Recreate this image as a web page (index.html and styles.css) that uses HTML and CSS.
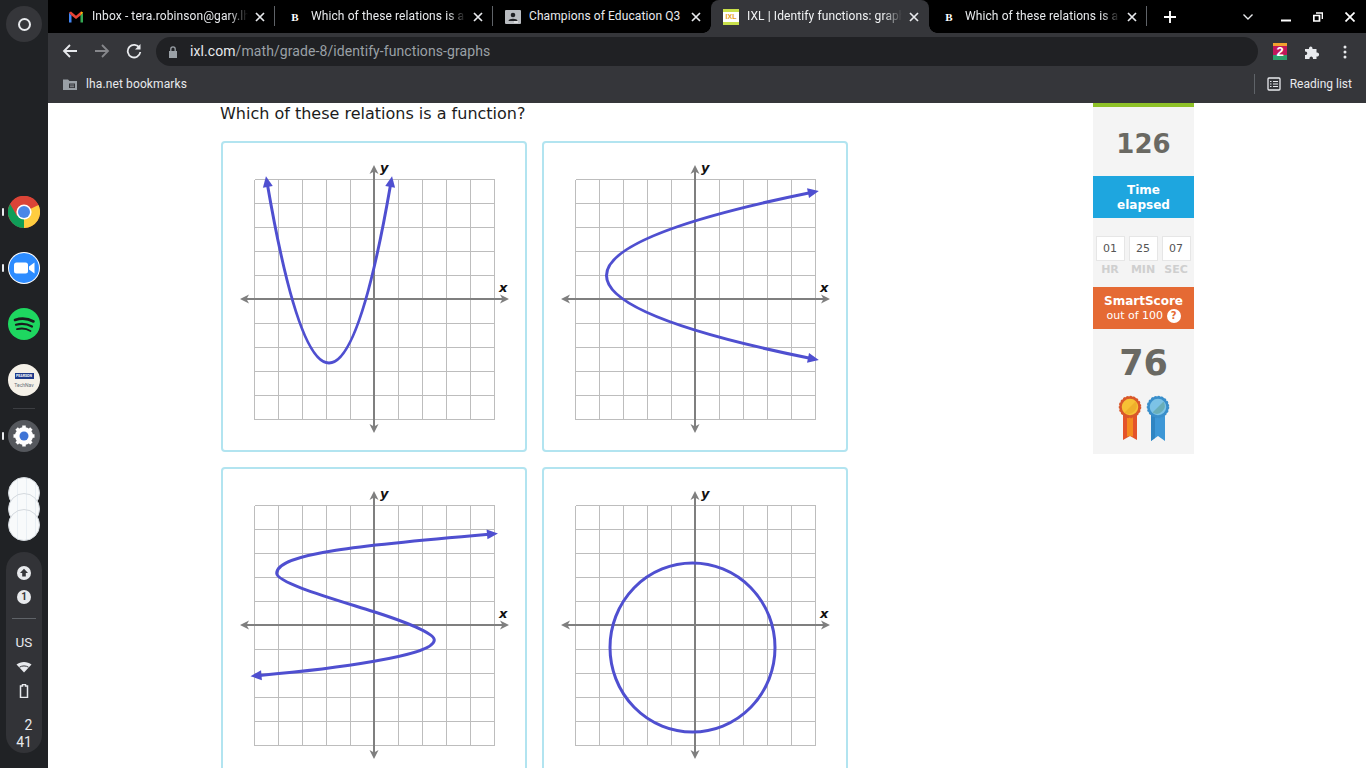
FILE: index.html
```html
<!DOCTYPE html>
<html lang="en">
<head>
<meta charset="utf-8">
<title>IXL | Identify functions: graphs</title>
<link rel="stylesheet" href="styles.css">
</head>
<body>
<svg class="defs" aria-hidden="true">
  <defs>
    <marker id="head" markerUnits="userSpaceOnUse" markerWidth="14" markerHeight="12" refX="2" refY="5" orient="auto-start-reverse" overflow="visible">
      <path d="M0 0L11 5L0 10Z" fill="#4f4fd0"/>
    </marker>
    <g id="axes">
      <g transform="translate(.5 .5)">
        <path class="grid" d="M-120 -120V120M-96 -120V120M-72 -120V120M-48 -120V120M-24 -120V120M0 -120V120M24 -120V120M48 -120V120M72 -120V120M96 -120V120M120 -120V120M-120 -120H120M-120 -96H120M-120 -72H120M-120 -48H120M-120 -24H120M-120 0H120M-120 24H120M-120 48H120M-120 72H120M-120 96H120M-120 120H120"/>
      </g>
      <path class="axis" d="M-130 0H131M0 -130V130"/>
      <path class="axishead" d="M-134 0L-125 -4.500L-127.500 0L-125 4.500ZM135 0L126 -4.500L128.500 0L126 4.500ZM0 -134L-4.500 -125L0 -127.500L4.500 -125ZM0 134L-4.500 125L0 127.500L4.500 125Z"/>
    </g>
  </defs>
</svg>

<aside class="shelf">
  <div class="launcher"><span class="launcher-ring"></span></div>
  <div class="apps">
    <div class="app on">
      <svg class="appicon" viewBox="0 0 32 32">
        <circle cx="16" cy="16" r="16" fill="#db4437"/>
        <path d="M16 16L2.100 24A16 16 0 0 1 2.100 8Z" fill="#db4437"/>
        <path d="M16 16L2.100 8A16 16 0 0 0 16 32Z" fill="#0f9d58"/>
        <path d="M16 16L16 32A16 16 0 0 0 30.500 9Z" fill="#ffcd40"/>
        <path d="M16 9L30.500 9A16 16 0 0 0 2.100 8L9 20Z" fill="#db4437"/>
        <circle cx="16" cy="16" r="7.600" fill="#fff"/>
        <circle cx="16" cy="16" r="6" fill="#4a87e8"/>
      </svg>
    </div>
    <div class="app on">
      <svg class="appicon" viewBox="0 0 32 32">
        <circle cx="16" cy="16" r="16" fill="#fff"/>
        <circle cx="16" cy="16" r="15" fill="#2d8cff"/>
        <rect x="6" y="10.500" width="14" height="11" rx="2.500" fill="#fff"/>
        <path d="M21 14.500L26.500 10.500V21.500L21 17.500Z" fill="#fff"/>
      </svg>
    </div>
    <div class="app">
      <svg class="appicon" viewBox="0 0 32 32">
        <circle cx="16" cy="16" r="16" fill="#1ed760"/>
        <path class="spot" d="M7 12C13 10 20 10.500 25.500 13.500"/>
        <path class="spot s2" d="M8 16.800C13 15.300 19 15.800 24 18.500"/>
        <path class="spot s3" d="M9 21.200C13.500 20 18.500 20.500 22.500 23"/>
      </svg>
    </div>
    <div class="app tech">
      <div class="pearson"><span class="pearson-top">PEARSON</span><span class="pearson-sub">TechNav</span></div>
    </div>
    <div class="app on settings">
      <svg class="appicon" viewBox="0 0 32 32">
        <circle cx="16" cy="16" r="16" fill="#55585d"/>
        <circle cx="16" cy="16" r="7" fill="none" stroke="#fff" stroke-width="4"/>
        <path class="teeth" d="M16 5.500V26.500M5.500 16H26.500M8.600 8.600L23.400 23.400M23.400 8.600L8.600 23.400"/>
        <circle cx="16" cy="16" r="6" fill="#fff"/>
        <circle cx="16" cy="16" r="4.500" fill="#3f74d6"/>
      </svg>
    </div>
  </div>
  <div class="stack">
    <span class="stackdot"></span>
    <span class="stackdot"></span>
    <span class="stackdot"></span>
  </div>
  <div class="status">
    <svg class="st-ic" viewBox="0 0 14 14"><circle cx="7" cy="7" r="7" fill="#e8eaed"/><path d="M7 2.800L11 7H8.800V10.500H5.200V7H3Z" fill="#35363a"/></svg>
    <span class="st-num">1</span>
    <span class="st-line"></span>
    <span class="st-us">US</span>
    <svg class="st-wifi" viewBox="0 0 16 12"><path d="M0.500 3.500C4.500 0 11.500 0 15.500 3.500L8 11.500Z" fill="#e8eaed"/><path d="M3.500 6.200C6 4.500 10 4.500 12.500 6.200" stroke="#35363a" stroke-width="1" fill="none"/></svg>
    <svg class="st-bat" viewBox="0 0 10 14"><path d="M3.500 0.500H6.500V2H8.500V13.500H1.500V2H3.500Z" fill="none" stroke="#e8eaed" stroke-width="1.500"/></svg>
    <span class="st-time"><span class="st-h">2</span><span>41</span></span>
  </div>
</aside>

<div class="browser">
  <div class="tabstrip">
    <div class="tab sep">
      <svg class="fav" viewBox="0 0 16 16"><path d="M1 3.500V13.500H3.500V6.500Z" fill="#4285f4"/><path d="M15 3.500V13.500H12.500V6.500Z" fill="#34a853"/><path d="M3.500 6.500L1 3.500L3 2.500L8 6.800L13 2.500L15 3.500L12.500 6.500L8 10Z" fill="#ea4335"/><path d="M13 2.500L15 3.500L12.500 6.500Z" fill="#fbbc04"/></svg>
      <span class="title fade">Inbox - tera.robinson@gary.lh</span>
      <svg class="close" viewBox="0 0 10 10"><path d="M1 1L9 9M9 1L1 9"/></svg>
    </div>
    <div class="tab sep">
      <span class="fav favb">B</span>
      <span class="title fade">Which of these relations is a fu</span>
      <svg class="close" viewBox="0 0 10 10"><path d="M1 1L9 9M9 1L1 9"/></svg>
    </div>
    <div class="tab">
      <svg class="fav" viewBox="0 0 16 16"><rect y="1" width="16" height="14" rx="1" fill="#b9bcc0"/><circle cx="8" cy="6" r="2.300" fill="#202124"/><path d="M3.500 12C3.500 9 12.500 9 12.500 12Z" fill="#202124"/><rect x="9" y="12.500" width="4" height="1" fill="#fff"/></svg>
      <span class="title">Champions of Education Q3</span>
      <svg class="close" viewBox="0 0 10 10"><path d="M1 1L9 9M9 1L1 9"/></svg>
    </div>
    <div class="tab active">
      <span class="fav favixl"><span class="favixl-in">IXL</span></span>
      <span class="title fade">IXL | Identify functions: graphs</span>
      <svg class="close" viewBox="0 0 10 10"><path d="M1 1L9 9M9 1L1 9"/></svg>
    </div>
    <div class="tab sep">
      <span class="fav favb">B</span>
      <span class="title fade">Which of these relations is a fu</span>
      <svg class="close" viewBox="0 0 10 10"><path d="M1 1L9 9M9 1L1 9"/></svg>
    </div>
    <svg class="newtab" viewBox="0 0 12 12"><path d="M6 0V12M0 6H12"/></svg>
    <svg class="caret" viewBox="0 0 10 6"><path d="M0.500 0.500L5 5L9.500 0.500"/></svg>
    <div class="winbtns">
      <svg class="winbtn" viewBox="0 0 10 10"><path d="M0 8.500H10" stroke="#fff" stroke-width="2"/></svg>
      <svg class="winbtn" viewBox="0 0 10 10"><path d="M3 1H9.500V7M0.800 3.500H6.500V9H0.800Z" fill="none" stroke="#fff" stroke-width="1.700"/></svg>
      <svg class="winbtn" viewBox="0 0 10 10"><path d="M0.500 0.500L9.500 9.500M9.500 0.500L0.500 9.500" stroke="#fff" stroke-width="1.700"/></svg>
    </div>
  </div>

  <div class="toolbar">
    <svg class="nav" viewBox="0 0 16 16"><path class="navp" d="M15 8H2M8 2L2 8L8 14"/></svg>
    <svg class="nav dim" viewBox="0 0 16 16"><path class="navp" d="M1 8H14M8 2L14 8L8 14"/></svg>
    <svg class="nav" viewBox="0 0 16 16"><path class="navp" d="M13.500 5A6.300 6.300 0 1 0 14.300 9"/><path d="M14.500 1V6.500H9Z" fill="#e8eaed"/></svg>
    <div class="omni">
      <svg class="lock" viewBox="0 0 10 12"><path d="M1 5H9V12H1Z" fill="#9aa0a6"/><path d="M2.800 5V3A2.200 2.200 0 0 1 7.200 3V5" fill="none" stroke="#9aa0a6" stroke-width="1.300"/></svg>
      <span class="url"><span class="host">ixl.com</span>/math/grade-8/identify-functions-graphs</span>
    </div>
    <div class="ext-row">
      <span class="ext2"><span class="ext2-num">2</span></span>
      <svg class="ext" viewBox="0 0 16 16"><path d="M1 5H5C4.500 1.500 9 1.500 8.500 5H12.500V8.500C16 8 16 13 12.500 12.500V15H9C9.500 11.500 5 11.500 5.500 15H1V11C4 11.500 4 7 1 7.500Z" fill="#e8eaed"/></svg>
      <svg class="ext" viewBox="0 0 16 16"><circle cx="8" cy="3" r="1.500" fill="#e8eaed"/><circle cx="8" cy="8" r="1.500" fill="#e8eaed"/><circle cx="8" cy="13" r="1.500" fill="#e8eaed"/></svg>
    </div>
  </div>

  <div class="bookmarks">
    <svg class="bm-folder" viewBox="0 0 14 12"><path d="M0 1.500H5L6.500 3H14V12H0Z" fill="#9aa0a6"/><rect x="6" y="5.500" width="6" height="4.500" fill="#35363a"/><path d="M7 7H11M7 8.700H11" stroke="#9aa0a6" stroke-width=".8"/></svg>
    <span class="bm-text">lha.net bookmarks</span>
    <span class="bm-spacer"></span>
    <span class="bm-divider"></span>
    <svg class="bm-list" viewBox="0 0 14 14"><rect x="1" y="1" width="12" height="12" rx="1" fill="none" stroke="#e8eaed" stroke-width="1.300"/><path d="M3 4.500H4.500M6 4.500H11M3 7H4.500M6 7H11M3 9.500H4.500M6 9.500H11" stroke="#e8eaed" stroke-width="1.100"/></svg>
    <span class="bm-read">Reading list</span>
  </div>

  <main class="page">
    <section class="content">
      <p class="question">Which of these relations is a function?</p>
      <div class="choices">
        <div class="card">
          <svg class="graph" viewBox="-151 -156 302 307">
            <use href="#axes"/>
            <text class="lab" x="125" y="-7">x</text>
            <text class="lab" x="6" y="-127">y</text>
            <path class="curve" d="M-106.500 -114Q-45 242 16.500 -114" marker-start="url(#head)" marker-end="url(#head)"/>
          </svg>
        </div>
        <div class="card">
          <svg class="graph" viewBox="-151 -156 302 307">
            <use href="#axes"/>
            <text class="lab" x="125" y="-7">x</text>
            <text class="lab" x="6" y="-127">y</text>
            <path class="curve" d="M115 -106.300Q-292 -23.500 115 59.300" marker-start="url(#head)" marker-end="url(#head)"/>
          </svg>
        </div>
        <div class="card">
          <svg class="graph" viewBox="-151 -156 302 307">
            <use href="#axes"/>
            <text class="lab" x="125" y="-7">x</text>
            <text class="lab" x="6" y="-127">y</text>
            <path class="curve" d="M115 -90.800C-10 -80 -97.300 -72 -97.300 -51.700C-97.300 -42 -40 -26 0 -13.300C30 -3.700 60.300 8 60.300 15C60.300 24 30 31 0 36.300C-35 42.500 -75 47 -114.500 50.400" marker-start="url(#head)" marker-end="url(#head)"/>
          </svg>
        </div>
        <div class="card">
          <svg class="graph" viewBox="-151 -156 302 307">
            <use href="#axes"/>
            <text class="lab" x="125" y="-7">x</text>
            <text class="lab" x="6" y="-127">y</text>
            <ellipse class="curve" cx="-2.500" cy="22.500" rx="82.500" ry="84.500"/>
          </svg>
        </div>
      </div>
    </section>

    <aside class="stats">
      <div class="greenbar"></div>
      <div class="count">126</div>
      <div class="statlabel blue">Time<br>elapsed</div>
      <div class="timer">
        <div class="tcell"><span class="tbox">01</span><span class="tunit">HR</span></div>
        <div class="tcell"><span class="tbox">25</span><span class="tunit">MIN</span></div>
        <div class="tcell"><span class="tbox">07</span><span class="tunit">SEC</span></div>
      </div>
      <div class="statlabel orange">SmartScore<span class="outof">out of 100 <span class="qmark">?</span></span></div>
      <div class="score">76</div>
      <svg class="medals" viewBox="0 0 60 48">
        <path d="M9 16H23V45L16 41L9 45Z" fill="#e4532a"/>
        <path d="M13 16H19V41.500L16 41L13 41.500Z" fill="#f48a1f"/>
        <circle cx="16" cy="12" r="9.500" fill="#f7c135" stroke="#d9582a" stroke-width="2.500"/>
        <circle class="scallop red" cx="16" cy="12" r="10.500"/>
        <path d="M10.500 17.500L21.500 6.500A8 8 0 0 1 10.500 17.500Z" fill="#eeb02b"/>
        <path d="M37 16H51V46L44 41L37 46Z" fill="#3d97d6"/>
        <path d="M37 16H41V43L37 46Z" fill="#2f85c2"/>
        <circle cx="44" cy="12" r="9.500" fill="#7cc3e6" stroke="#3a8fcb" stroke-width="2.500"/>
        <circle class="scallop bluec" cx="44" cy="12" r="10.500"/>
        <path d="M38.500 17.500L49.500 6.500A8 8 0 0 1 38.500 17.500Z" fill="#69aeb8"/>
      </svg>
    </aside>
  </main>
</div>
</body>
</html>
```
FILE: styles.css
```css
* { box-sizing: border-box; }
html, body { height: 100%; }
body {
  margin: 0;
  height: 768px;
  display: flex;
  overflow: hidden;
  background: #fff;
  font-family: Roboto, "Liberation Sans", sans-serif;
}
.defs { display: block; width: 0; height: 0; flex: none; }

/* shelf */
.shelf {
  flex: 0 0 48px;
  background: #202225;
  display: flex;
  flex-direction: column;
  align-items: center;
  padding-top: 6px;
}
.launcher {
  width: 36px; height: 36px;
  border-radius: 50%;
  background: #35363a;
  display: flex; align-items: center; justify-content: center;
}
.launcher-ring { width: 13px; height: 13px; border: 2px solid #e8eaed; border-radius: 50%; }
.apps { margin-top: 142px; width: 48px; }
.app { height: 56px; display: flex; align-items: center; justify-content: center; position: relative; }
.appicon { width: 32px; height: 32px; display: block; }
.app.on::before {
  content: ""; position: absolute; left: 2px; top: 24px;
  width: 2px; height: 8px; background: #e8eaed; border-radius: 1px;
}
.settings::after {
  content: ""; position: absolute; left: 13px; top: 0;
  width: 22px; height: 1px; background: #3c3e42;
}
.spot { fill: none; stroke: #1a1c1e; stroke-width: 2.600; stroke-linecap: round; }
.s2 { stroke-width: 2.200; }
.s3 { stroke-width: 1.800; }
.teeth { stroke: #fff; stroke-width: 3.500; fill: none; }
.pearson {
  width: 32px; height: 32px; border-radius: 50%;
  background: #f5f1e8;
  display: flex; flex-direction: column; align-items: center; justify-content: center; gap: 3px;
}
.pearson-top { background: #1e3a8a; color: #fff; font-size: 3.500px; font-weight: 700; width: 19px; height: 6px; line-height: 6px; text-align: center; }
.pearson-sub { color: #66707a; font-size: 5px; line-height: 6px; }
.stack { margin-top: 13px; padding-bottom: 16px; display: flex; flex-direction: column; }
.stackdot {
  width: 32px; height: 32px; border-radius: 50%;
  background:
    repeating-linear-gradient(90deg, transparent 0 8px, #e9eff4 8px 9px),
    #f8fafb;
  margin-bottom: -16px;
  border: 1px solid #d4d9de;
}
.status {
  margin-top: 11px;
  width: 36px; height: 201px;
  background: #323337;
  border-radius: 18px;
  display: flex; flex-direction: column; align-items: center;
  padding-top: 14px;
  color: #e8eaed;
}
.st-ic { width: 14px; height: 14px; display: block; }
.st-num {
  width: 14px; height: 14px; border-radius: 50%;
  background: #e8eaed; color: #35363a;
  font-size: 10px; font-weight: 700; line-height: 14px; text-align: center;
  margin-top: 10px;
}
.st-line { width: 24px; height: 1px; background: #5f6368; margin-top: 14px; }
.st-us { font-size: 13.500px; line-height: 16px; margin-top: 15px; }
.st-wifi { width: 16px; height: 12px; margin-top: 11px; display: block; }
.st-bat { width: 10px; height: 14px; margin-top: 11px; display: block; }
.st-time { font-size: 14px; line-height: 17px; margin-top: 19px; display: flex; flex-direction: column; align-items: center; }
.st-h { padding-left: 9px; }

/* browser frame */
.browser { flex: 1; min-width: 0; display: flex; flex-direction: column; height: 768px; }
.tabstrip {
  height: 33px; flex: none;
  background: #000;
  display: flex; align-items: center;
  padding-left: 9px;
  position: relative;
}
.tab {
  width: 218px; height: 33px; flex: none;
  display: flex; align-items: center;
  padding-left: 12px;
  color: #e8eaed;
  position: relative;
}
.tab:first-child { padding-left: 11px; }
.tab:first-child .title { width: 156px; }
.tab.sep::after {
  content: ""; position: absolute; right: 0; top: 6px;
  width: 1px; height: 20px; background: #5f6368;
}
.tab.active { background: #35363a; border-radius: 8px 8px 0 0; height: 33px; color: #f1f3f4; }
.tab.active::before, .tab.active::after {
  content: ""; position: absolute; bottom: 0; width: 8px; height: 8px;
}
.tab.active::before { left: -8px; background: radial-gradient(circle at 0 0, #000 7.500px, #35363a 8px); }
.tab.active::after { right: -8px; background: radial-gradient(circle at 100% 0, #000 7.500px, #35363a 8px); }
.fav { width: 16px; height: 16px; flex: none; display: block; }
.favb { font: 700 11px/16px "Liberation Serif", serif; color: #fff; text-align: center; }
.favixl { background: #c8e04a; display: flex; align-items: center; justify-content: center; padding: 3px 0; }
.favixl-in { background: #fff; width: 16px; height: 10px; font: 700 7px/10px "Liberation Sans", sans-serif; color: #e8a020; text-align: center; }
.title {
  width: 155px; margin-left: 8px; margin-top: -2px; flex: none;
  font-size: 12px; line-height: 16px; white-space: nowrap; overflow: hidden;
  letter-spacing: .1px;
}
.fade { -webkit-mask-image: linear-gradient(to right, #000 88%, transparent 100%); mask-image: linear-gradient(to right, #000 88%, transparent 100%); }
.close { width: 10px; height: 10px; margin-left: 7px; flex: none; display: block; }
.close path { stroke: #e8eaed; stroke-width: 1.700; fill: none; }
.newtab { width: 12px; height: 12px; margin-left: 17px; flex: none; }
.newtab path { stroke: #fff; stroke-width: 1.900; fill: none; }
.caret { width: 10px; height: 6px; margin-left: 67px; flex: none; }
.caret path { stroke: #e8eaed; stroke-width: 1.400; fill: none; }
.winbtns { display: flex; gap: 22px; margin-left: 28px; }
.winbtn { width: 10px; height: 10px; display: block; }

.toolbar {
  height: 35px; flex: none;
  background: #35363a;
  display: flex; align-items: flex-start;
  padding: 4px 0 0 14px;
  gap: 16px;
}
.nav { width: 16px; height: 16px; margin-top: 6px; flex: none; }
.navp { fill: none; stroke: #e8eaed; stroke-width: 1.800; }
.nav.dim { opacity: .45; }
.omni {
  width: 1102px; height: 29px; margin-left: -2px; flex: none;
  background: #202124;
  border-radius: 15px;
  display: flex; align-items: center;
  padding-left: 12px;
}
.lock { width: 10px; height: 12px; flex: none; }
.url { margin-left: 12px; margin-top: -2px; font-size: 14px; line-height: 18px; color: #9aa0a6; letter-spacing: .08px; }
.host { color: #e8eaed; }
.ext-row { display: flex; align-items: center; gap: 17px; margin-left: -1px; height: 29px; }
.ext2 {
  width: 14px; height: 17px;
  background: linear-gradient(#f2a22e 0 18%, #c2185b 18% 70%, #2e9f6b 70%);
  display: flex; align-items: center; justify-content: center;
}
.ext2-num { color: #fff; font: 700 13px/15px "Liberation Sans", sans-serif; }
.ext { width: 16px; height: 16px; display: block; }

.bookmarks {
  height: 35px; flex: none;
  background: #35363a;
  display: flex; align-items: center;
  padding: 0 14px 3px 15px;
  color: #e8eaed;
  font-size: 12px;
}
.bm-folder { width: 14px; height: 12px; flex: none; }
.bm-text { margin-left: 9px; letter-spacing: .12px; }
.bm-spacer { flex: 1; }
.bm-divider { width: 1px; height: 20px; background: #5f6368; margin-right: 12px; }
.bm-list { width: 14px; height: 14px; margin-right: 9px; flex: none; }

/* page */
.page { flex: 1; min-height: 0; display: flex; background: #fff; overflow: hidden; }
.content { flex: 0 0 1045px; padding-left: 172px; padding-top: 1px; }
.question {
  margin: 0 0 17px;
  font: 16px/20px "DejaVu Sans", Verdana, sans-serif;
  color: #1c1c1c;
}
.choices { display: grid; grid-template-columns: 306px 306px; gap: 15px; margin-left: 1px; }
.card { width: 306px; height: 311px; border: 2px solid #b2e4f0; border-radius: 4px; background: #fff; }
.graph { display: block; width: 302px; height: 307px; }
.grid { stroke: #bdbdbd; stroke-width: 1; fill: none; shape-rendering: crispEdges; }
.axis { stroke: #7f7f7f; stroke-width: 2; fill: none; }
.axishead { fill: #7f7f7f; }
.curve { fill: none; stroke: #4f4fd0; stroke-width: 3; }
.lab { font: italic 700 13px "DejaVu Sans", sans-serif; fill: #111; }

.stats {
  width: 101px; flex: none;
  background: #f4f4f4;
  height: 351px;
  display: flex; flex-direction: column; align-items: center;
}
.greenbar { height: 4px; width: 100%; background: #8ec127; flex: none; }
.count {
  height: 69px; flex: none;
  font: 700 26px/75px "DejaVu Sans", Verdana, sans-serif;
  color: #6a6963;
}
.statlabel {
  width: 100%; height: 42px; flex: none;
  color: #fff; text-align: center;
  font: 700 12px/15px "DejaVu Sans", Verdana, sans-serif;
  padding-top: 7px;
}
.blue { background: #1ea6df; }
.orange { background: #e56a34; }
.outof { display: block; font-weight: 400; font-size: 11px; line-height: 14px; }
.qmark {
  display: inline-block; width: 14px; height: 14px; border-radius: 50%;
  background: #fff; color: #e56a34; font-weight: 700; font-size: 10px; line-height: 14px;
  vertical-align: 0;
}
.timer { height: 69px; flex: none; display: flex; gap: 4px; padding-top: 18px; margin-left: -1px; }
.tcell { display: flex; flex-direction: column; align-items: center; }
.tbox {
  width: 29px; height: 25px;
  background: #fff; border: 1px solid #e6e6e6;
  font: 11px/23px "DejaVu Sans", Verdana, sans-serif;
  color: #555; text-align: center;
}
.tunit { font: 700 11px/18px "DejaVu Sans", Verdana, sans-serif; color: #cfcfcf; }
.score {
  height: 66px; flex: none;
  font: 700 35px/68px "DejaVu Sans", Verdana, sans-serif;
  color: #6a6963;
}
.medals { width: 60px; height: 48px; flex: none; display: block; }
.scallop { fill: none; stroke-width: 1.500; stroke-dasharray: 2 1.500; }
.scallop.red { stroke: #d9582a; }
.scallop.bluec { stroke: #3a8fcb; }
```
